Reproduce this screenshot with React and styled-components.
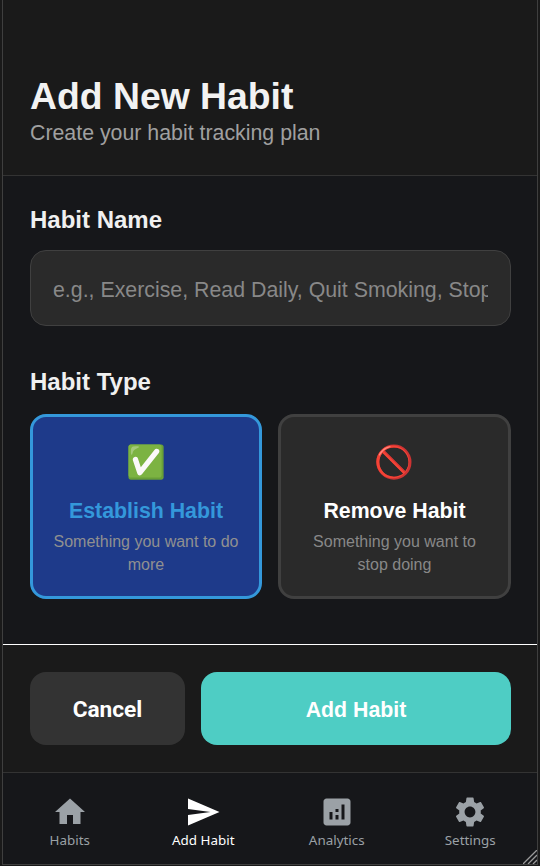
import React from "react";
import styled, { createGlobalStyle } from "styled-components";

const Global = createGlobalStyle`
  html, body { margin: 0; padding: 0; background: #1a1a1a; }
  * { box-sizing: border-box; }
  #root { width: 540px; height: 866px; }
`;

const Page = styled.div`
  width: 540px; height: 866px;
  padding: 0 2px 1px;
  background: #1a1a1a;
`;

const Frame = styled.div`
  height: 100%;
  display: flex; flex-direction: column;
  position: relative;
  background: #16171a;
  border-left: 1px solid #3f3f3f;
  border-right: 1px solid #3f3f3f;
  border-bottom: 1px solid #3f3f3f;
  font-family: "Liberation Sans", Arial, sans-serif;
  overflow: hidden;
`;

const Header = styled.header`
  height: 176px;
  padding: 75px 27px 0;
  background: #1a1a1a;
  border-bottom: 1px solid #333;
`;

const Title = styled.h1`
  margin: 0;
  font-size: 37.33px; line-height: 42px; font-weight: 700;
  color: #f2f2f2;
`;

const Subtitle = styled.p`
  margin: 0;
  font-size: 21.33px; line-height: 32px;
  color: #a0a0a0;
`;

const Form = styled.main`
  flex: 1;
  padding: 30px 27px 0;
  background: #16171a;
  border-bottom: 1px solid #fff;
`;

const Label = styled.div`
  font-size: 24px; line-height: 27px; font-weight: 700;
  color: #f0f0f0;
  margin-bottom: ${p => p.$gap}px;
`;

const NameInput = styled.input`
  display: block;
  width: 481px; height: 76px;
  padding: 4px 22px 0;
  background: #2a2a2a;
  border: 1px solid #404040;
  border-radius: 16px;
  font: 400 21.33px "Liberation Sans", Arial, sans-serif;
  color: #fff;
  outline: none;
  margin-bottom: 42px;
  &::placeholder { color: #888; opacity: 1; }
`;

const Types = styled.div`
  display: grid;
  grid-template-columns: 232px 233px;
  gap: 16px;
`;

const TypeCard = styled.div`
  height: 185px;
  padding: 26px 20px 0;
  border-radius: 16px;
  border: 3px solid ${p => (p.$active ? "#3498db" : "#404040")};
  background: ${p => (p.$active ? "#1e3a8a" : "#2a2a2a")};
  display: flex; flex-direction: column; align-items: center;
  text-align: center;
`;

const Emoji = styled.div`
  font-size: 32px; line-height: 38px;
  height: 42px;
  margin-bottom: 13px;
  font-family: "Noto Color Emoji", "Liberation Sans", sans-serif;
`;

const TypeTitle = styled.div`
  font-size: 21.33px; line-height: 26px; font-weight: 700;
  color: ${p => (p.$active ? "#3498db" : "#fff")};
  margin-bottom: 6px;
`;

const TypeDesc = styled.div`
  font-size: 16px; line-height: 23px;
  color: ${p => (p.$active ? "#909090" : "#888")};
`;

const Actions = styled.div`
  height: 128px;
  flex: none;
  padding: 27px 26px 0 27px;
  display: flex; gap: 16px;
  background: #1a1a1a;
  border-bottom: 1px solid #333;
`;

const ActionButton = styled.button`
  height: 73px;
  border: 0;
  border-radius: 16px;
  color: #fff;
  font-weight: 700;
`;

const CancelButton = styled(ActionButton)`
  width: 155px;
  padding-top: 2px;
  background: #333;
  font-size: 22.67px;
  font-family: Roboto, sans-serif;
`;

const AddButton = styled(ActionButton)`
  flex: 1;
  padding-top: 4px;
  background: #4ecdc4;
  font-size: 21.33px;
  font-family: "Liberation Sans", Arial, sans-serif;
`;

const Nav = styled.nav`
  height: 91px;
  flex: none;
  display: grid;
  grid-template-columns: repeat(4, 1fr);
  background: #16171a;
`;

const NavItem = styled.div`
  display: flex; flex-direction: column; align-items: center;
  padding-top: 21px;
  color: ${p => (p.$active ? "#fff" : "#9ba1a6")};
`;

const NavLabel = styled.span`
  margin-top: 1px;
  font-family: "Noto Sans", sans-serif;
  font-size: 13.4px; line-height: 18px;
`;

const Grip = styled.svg`
  position: absolute; right: 0; bottom: 0;
`;

const Icon = ({ d }) => (
  <svg width="36" height="36" viewBox="0 0 24 24" fill="currentColor"><path d={d} /></svg>
);

const paths = {
  home: "M10 20v-6h4v6h5v-8h3L12 3 2 12h3v8z",
  send: "M2.01 21L23 12 2.01 3 2 10l15 2-15 2z",
  analytics: "M19 3H5c-1.1 0-2 .9-2 2v14c0 1.1.9 2 2 2h14c1.1 0 2-.9 2-2V5c0-1.1-.9-2-2-2zM9 17H7v-5h2v5zm4 0h-2v-3h2v3zm0-5h-2v-2h2v2zm4 5h-2V7h2v10z",
  settings: "M19.14 12.94c.04-.3.06-.61.06-.94 0-.32-.02-.64-.07-.94l2.03-1.58c.18-.14.23-.41.12-.61l-1.92-3.32c-.12-.22-.37-.29-.59-.22l-2.39.96c-.5-.38-1.03-.7-1.62-.94l-.36-2.54c-.04-.24-.24-.41-.48-.41h-3.84c-.24 0-.43.17-.47.41l-.36 2.54c-.59.24-1.13.57-1.62.94l-2.39-.96c-.22-.08-.47 0-.59.22L2.74 8.87c-.12.21-.08.47.12.61l2.03 1.58c-.05.3-.09.63-.09.94s.02.64.07.94l-2.03 1.58c-.18.14-.23.41-.12.61l1.92 3.32c.12.22.37.29.59.22l2.39-.96c.5.38 1.03.7 1.62.94l.36 2.54c.05.24.24.41.48.41h3.84c.24 0 .44-.17.47-.41l.36-2.54c.59-.24 1.13-.56 1.62-.94l2.39.96c.22.08.47 0 .59-.22l1.92-3.32c.12-.22.07-.47-.12-.61l-2.01-1.58zM12 15.6c-1.98 0-3.6-1.62-3.6-3.6s1.62-3.6 3.6-3.6 3.6 1.62 3.6 3.6-1.62 3.6-3.6 3.6z",
};

export default function App() {
  return (
    <>
      <Global />
      <Page>
        <Frame>
          <Header>
            <Title>Add New Habit</Title>
            <Subtitle>Create your habit tracking plan</Subtitle>
          </Header>
          <Form>
            <Label $gap={17}>Habit Name</Label>
            <NameInput placeholder="e.g., Exercise, Read Daily, Quit Smoking, Stop Procrastinating" />
            <Label $gap={19}>Habit Type</Label>
            <Types>
              <TypeCard $active>
                <Emoji>✅</Emoji>
                <TypeTitle $active>Establish Habit</TypeTitle>
                <TypeDesc $active>Something you want to do more</TypeDesc>
              </TypeCard>
              <TypeCard>
                <Emoji>🚫</Emoji>
                <TypeTitle>Remove Habit</TypeTitle>
                <TypeDesc>Something you want to stop doing</TypeDesc>
              </TypeCard>
            </Types>
          </Form>
          <Actions>
            <CancelButton>Cancel</CancelButton>
            <AddButton>Add Habit</AddButton>
          </Actions>
          <Nav>
            <NavItem><Icon d={paths.home} /><NavLabel>Habits</NavLabel></NavItem>
            <NavItem $active><Icon d={paths.send} /><NavLabel>Add Habit</NavLabel></NavItem>
            <NavItem><Icon d={paths.analytics} /><NavLabel>Analytics</NavLabel></NavItem>
            <NavItem><Icon d={paths.settings} /><NavLabel>Settings</NavLabel></NavItem>
          </Nav>
          <Grip width="14" height="14" viewBox="0 0 14 14" stroke="#9a9a9a" strokeWidth="1.3">
            <path d="M14 0L0 14M14 5L5 14M14 10L10 14" />
          </Grip>
        </Frame>
      </Page>
    </>
  );
}
